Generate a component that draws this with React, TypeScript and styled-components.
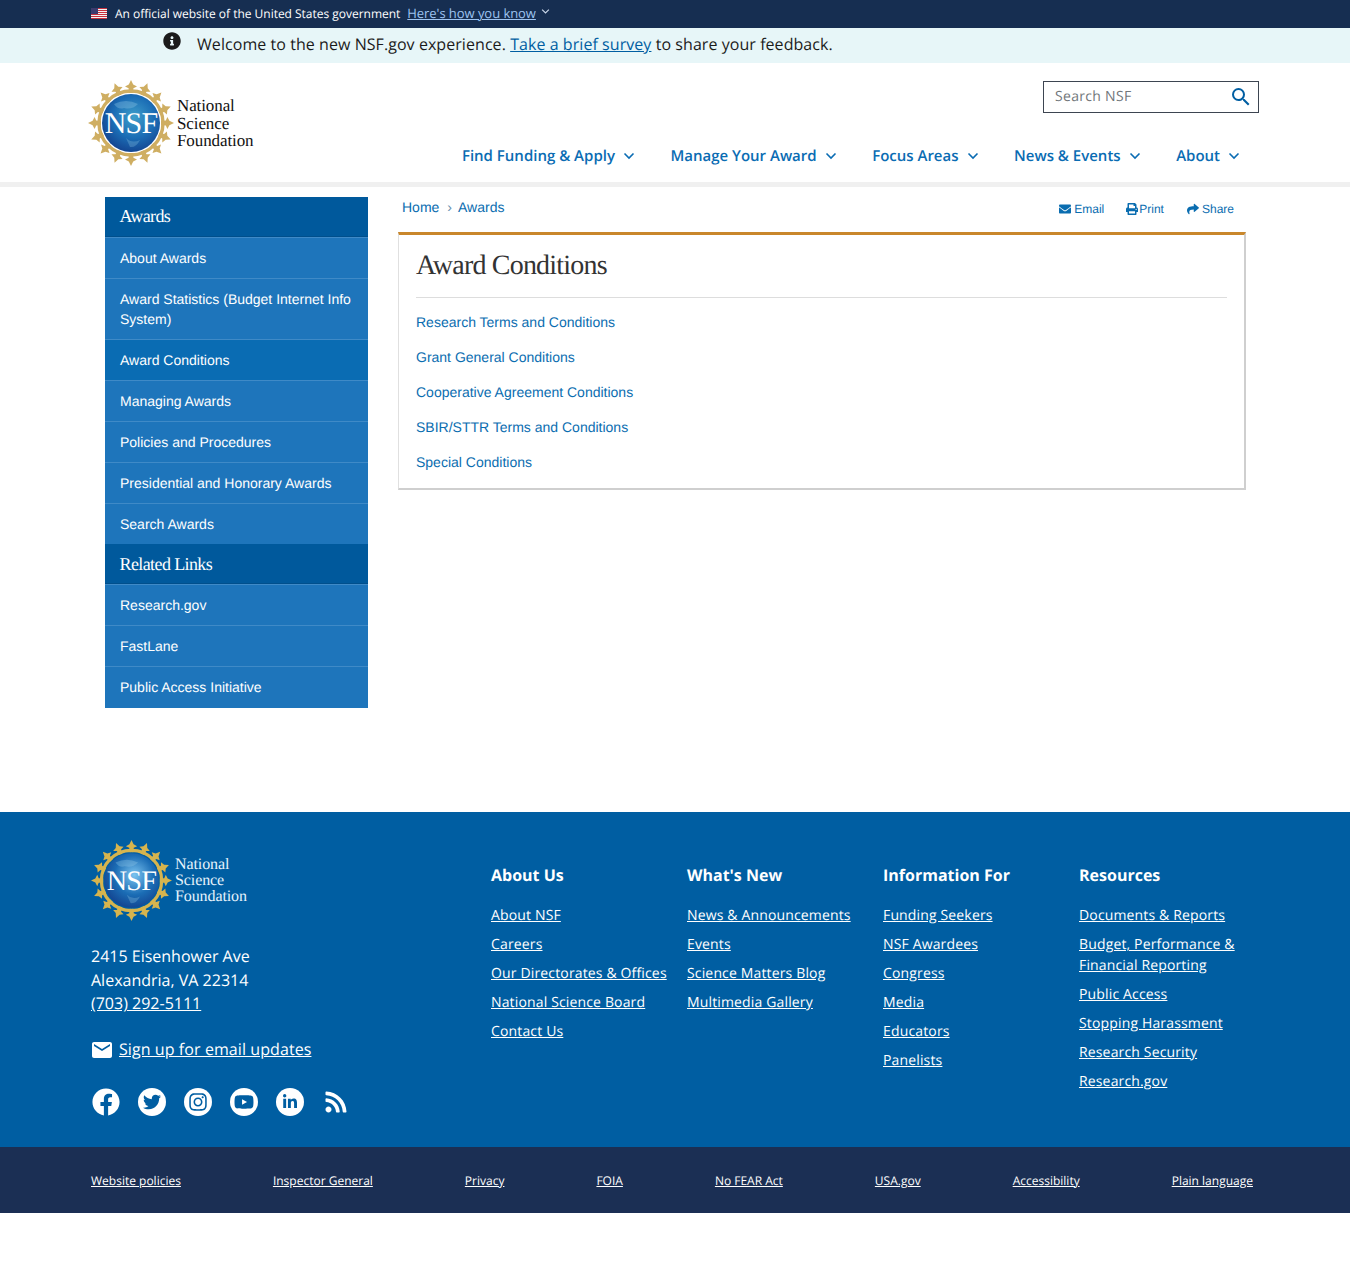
import React from "react";
import styled, { createGlobalStyle } from "styled-components";
import { FaEnvelope, FaPrint, FaShare, FaInfoCircle, FaFacebook, FaTwitter, FaInstagram, FaYoutube, FaLinkedinIn, FaRss } from "react-icons/fa";
import { MdEmail, MdSearch } from "react-icons/md";

const Global = createGlobalStyle`
  html, body { margin: 0; padding: 0; background: #fff; }
  body { font-family: "Open Sans", sans-serif; color: #1b1b1b; text-rendering: geometricPrecision; }
  * { box-sizing: border-box; }
  a { cursor: pointer; }
`;

const Page = styled.div`
  width: 1350px;
  min-height: 1273px;
  background: #fff;
`;

const GovBanner = styled.div`
  height: 28px;
  background: #162e51;
  display: flex;
  align-items: center;
  padding: 0 0 2px 91px;
  color: #fff;
  font-size: 12px;
`;
const GovText = styled.span`
  margin-left: 8px;
  letter-spacing: -0.02px;
`;
const GovLink = styled.a`
  margin-left: 7px;
  color: #9dc3f0;
  font-size: 13px;
  letter-spacing: -0.05px;
  text-decoration: underline;
`;
const GovChevron = styled.span`
  display: inline-flex;
  margin: -3px 0 0 5px;
`;

const Alert = styled.div`
  height: 35px;
  background: #e7f6f8;
  display: flex;
  align-items: flex-start;
  padding-left: 163px;
  font-size: 16px;
  letter-spacing: 0.06px;
  line-height: 32px;
  color: #1b1b1b;
`;
const AlertIcon = styled.span`
  display: inline-flex;
  font-size: 18px;
  margin: 4px 16px 0 0;
  color: #1b1b1b;
`;
const AlertLink = styled.a`
  color: #005ea2;
  text-decoration: underline;
`;

const Header = styled.header`
  height: 124px;
  border-bottom: 5px solid #f0f0f0;
  display: flex;
  justify-content: space-between;
  padding: 17px 91px 0 88px;
`;
const HeaderRight = styled.div`
  display: flex;
  flex-direction: column;
  align-items: flex-end;
  padding-top: 1px;
`;
const SearchBox = styled.div`
  width: 216px;
  height: 32px;
  border: 1px solid #3d4551;
  display: flex;
  align-items: center;
  justify-content: space-between;
  padding: 0 5px 2px 11px;
  font-size: 14px;
  letter-spacing: 0.3px;
  color: #71767a;
`;
const SearchIcon = styled.span`
  display: inline-flex;
  font-size: 24px;
  margin-top: 2px;
  color: #005ea2;
`;
const Nav = styled.nav`
  display: flex;
  gap: 35.5px;
  margin: 33px 19px 0 0;
`;
const NavItem = styled.a`
  display: flex;
  align-items: center;
  gap: 8px;
  font-size: 15px;
  font-weight: 600;
  line-height: 20px;
  height: 20px;
  color: #0a6cb3;
`;

const LogoWrap = styled.div`
  display: flex;
  align-items: center;
  height: 86px;
`;
const LogoText = styled.div<{ $light?: boolean; $size: number; $line: number }>`
  font-family: "Liberation Serif", serif;
  font-size: ${(p) => p.$size}px;
  line-height: ${(p) => p.$line}px;
  letter-spacing: -0.1px;
  color: ${(p) => (p.$light ? "#e6f3fc" : "#111")};
  margin-left: 3px;
  margin-top: 1px;
`;

const Content = styled.main`
  height: 625px;
  display: flex;
  gap: 30px;
  padding: 10px 0 0 105px;
`;

const Side = styled.aside`
  width: 263px;
  align-self: flex-start;
  background: #1e75bb;
  padding-bottom: 1px;
`;
const SideHeading = styled.div<{ $sub?: boolean }>`
  height: 40px;
  background: #00599c;
  color: #fff;
  font-family: "Liberation Serif", serif;
  font-size: 18px;
  letter-spacing: -0.6px;
  line-height: ${(p) => (p.$sub ? "39px" : "38px")};
  padding: ${(p) => (p.$sub ? "1px 0 0 14.5px" : "0 0 0 14.5px")};
  border-bottom: 1px solid #004f8c;
`;
const SideItem = styled.a<{ $active?: boolean }>`
  display: block;
  background: ${(p) => (p.$active ? "#0a6cb3" : "#1e75bb")};
  border-top: 1px solid #3f8ac7;
  color: #fff;
  font-family: "Liberation Sans", sans-serif;
  font-size: 14px;
  line-height: 20px;
  padding: 10px 15px;
`;

const MainCol = styled.section`
  width: 848px;
`;
const TopRow = styled.div`
  height: 35px;
  display: flex;
  justify-content: space-between;
  align-items: flex-start;
  padding: 0 12px 0 4px;
  font-family: "Liberation Sans", sans-serif;
`;
const Crumbs = styled.div`
  display: flex;
  gap: 5px;
  font-size: 14px;
  line-height: 20px;
  color: #0a6db0;
`;
const CrumbSep = styled.span`
  font-size: 14px;
  color: #6a8fb0;
  padding: 0 1px 0 3px;
`;
const Actions = styled.div`
  display: flex;
  gap: 22px;
  padding-top: 4px;
  font-size: 12px;
  line-height: 16px;
  color: #0a6db0;
`;
const ActionItem = styled.a<{ $tight?: boolean }>`
  display: flex;
  align-items: center;
  gap: ${(p) => (p.$tight ? "1px" : "3px")};
  margin-right: ${(p) => (p.$tight ? "1px" : "0")};
`;
const Panel = styled.div`
  height: 258px;
  border-top: 3px solid #c9872b;
  border-left: 1px solid #e0e0e0;
  border-right: 2px solid #cfcfcf;
  border-bottom: 2px solid #cfcfcf;
  padding: 0 17px;
  font-family: "Liberation Sans", sans-serif;
`;
const Title = styled.h1`
  margin: 0;
  height: 63px;
  border-bottom: 1px solid #ddd;
  font-family: "Liberation Serif", serif;
  font-weight: 400;
  font-size: 28px;
  letter-spacing: -0.8px;
  line-height: 61px;
  color: #333;
`;
const LinkList = styled.ul`
  list-style: none;
  margin: 0;
  padding: 14px 0 0;
  display: flex;
  flex-direction: column;
  gap: 15px;
`;
const PanelLink = styled.a`
  display: block;
  font-size: 14px;
  line-height: 20px;
  color: #0a6db0;
`;

const Footer = styled.footer`
  height: 335px;
  background: #005ea2;
  color: #fff;
  display: flex;
  padding: 28px 0 0 91px;
`;
const FootLeft = styled.div`
  width: 400px;
`;
const FootLogo = styled.div`
  display: flex;
  align-items: center;
  height: 81px;
`;
const Address = styled.address`
  font-style: normal;
  font-size: 16px;
  line-height: 23.5px;
  margin-top: 24px;
`;
const FootA = styled.a`
  color: #fff;
  text-decoration: underline;
`;
const Signup = styled.div`
  display: flex;
  align-items: center;
  gap: 5px;
  margin-top: 20px;
  font-size: 16px;
  letter-spacing: 0.08px;
  line-height: 24px;
`;
const MailIcon = styled.span`
  display: inline-flex;
  font-size: 24px;
  margin-left: -1px;
  margin-top: 2px;
`;
const Socials = styled.div`
  display: flex;
  gap: 18px;
  margin-top: 26px;
`;
const Social = styled.a<{ $plain?: boolean; $size: number }>`
  width: 28px;
  height: 28px;
  border-radius: 50%;
  background: ${(p) => (p.$plain ? "transparent" : "#fff")};
  color: ${(p) => (p.$plain ? "#fff" : "#005ea2")};
  display: flex;
  align-items: center;
  justify-content: center;
  font-size: ${(p) => p.$size}px;
  margin-left: 1px;
  margin-right: -1px;
`;
const FootCols = styled.div`
  display: flex;
`;
const FootCol = styled.div`
  width: 196px;
  padding-top: 23px;
`;
const FootHead = styled.h3`
  margin: 0 0 18px;
  font-size: 16px;
  line-height: 24px;
  font-weight: 700;
`;
const FootLinks = styled.div`
  display: flex;
  flex-direction: column;
  gap: 8px;
  font-size: 14px;
  letter-spacing: 0.15px;
  line-height: 21px;
  padding-right: 15px;
`;
const Bottom = styled.div`
  height: 66px;
  background: #1b2f54;
  display: flex;
  justify-content: space-between;
  align-items: center;
  padding: 0 97px 0 91px;
  font-size: 12px;
`;

const Flag = () => (
  <svg width="16" height="11" viewBox="0 0 16 11">
    <rect width="16" height="11" fill="#f4f4f4" />
    {[0, 2, 4, 6, 8, 10].map((y) => (
      <rect key={y} y={y} width="16" height="1" fill="#c8313e" />
    ))}
    <rect width="7" height="6" fill="#3c3b6e" />
  </svg>
);

const Chevron = ({ size = 12, color = "#0a6cb3" }: { size?: number; color?: string }) => (
  <svg width={size} height={size} viewBox="0 0 12 12">
    <path d="M1.5 3.5 L6 8 L10.5 3.5" fill="none" stroke={color} strokeWidth="1.6" />
  </svg>
);

const Seal = ({ size, light }: { size: number; light?: boolean }) => {
  const rays = Array.from({ length: 16 }, (_, i) => (i * 360) / 16);
  const gold = light ? "#d6b44e" : "#cfae62";
  const gid = light ? "gl" : "gd";
  return (
    <svg width={size} height={size} viewBox="0 0 86 86">
      <defs>
        <radialGradient id={gid} cx="55%" cy="40%" r="65%">
          <stop offset="0%" stopColor={light ? "#7cc4f0" : "#3f9fcb"} />
          <stop offset="55%" stopColor="#1b6db5" />
          <stop offset="100%" stopColor="#123f8c" />
        </radialGradient>
      </defs>
      <circle cx="43" cy="43" r="32" fill="none" stroke={gold} strokeWidth="3.4" />
      {rays.map((a) => (
        <g key={a} transform={`rotate(${a} 43 43)`}>
          <path d="M43 0 L45.2 4.6 L49 6.6 L45.4 8.2 L45 13 L41 13 L40.6 8.2 L37 6.6 L40.8 4.6 Z" fill={gold} />
        </g>
      ))}
      <circle cx="43" cy="43" r="29" fill={`url(#${gid})`} />
      <path d="M26 24 Q38 18 50 24 Q44 30 36 28 Q30 30 26 24 Z" fill="#8fc6e4" opacity="0.35" />
      <path d="M38 58 Q44 64 52 60 Q48 68 42 67 Z" fill="#8fc6e4" opacity="0.3" />
      <text x="43" y="53" textAnchor="middle" fontFamily="Liberation Serif, serif" fontSize="30" fill="#fff" letterSpacing="-0.8">
        NSF
      </text>
    </svg>
  );
};

const sideA = ["About Awards", "Award Statistics (Budget Internet Info System)", "Award Conditions", "Managing Awards", "Policies and Procedures", "Presidential and Honorary Awards", "Search Awards"];
const sideB = ["Research.gov", "FastLane", "Public Access Initiative"];
const panelLinks = ["Research Terms and Conditions", "Grant General Conditions", "Cooperative Agreement Conditions", "SBIR/STTR Terms and Conditions", "Special Conditions"];
const navItems = ["Find Funding & Apply", "Manage Your Award", "Focus Areas", "News & Events", "About"];
const footCols = [
  { h: "About Us", l: ["About NSF", "Careers", "Our Directorates & Offices", "National Science Board", "Contact Us"] },
  { h: "What's New", l: ["News & Announcements", "Events", "Science Matters Blog", "Multimedia Gallery"] },
  { h: "Information For", l: ["Funding Seekers", "NSF Awardees", "Congress", "Media", "Educators", "Panelists"] },
  { h: "Resources", l: ["Documents & Reports", "Budget, Performance & Financial Reporting", "Public Access", "Stopping Harassment", "Research Security", "Research.gov"] },
];
const bottomLinks = ["Website policies", "Inspector General", "Privacy", "FOIA", "No FEAR Act", "USA.gov", "Accessibility", "Plain language"];

export default function App() {
  return (
    <Page>
      <Global />
      <GovBanner>
        <Flag />
        <GovText>An official website of the United States government</GovText>
        <GovLink>Here's how you know</GovLink>
        <GovChevron>
          <Chevron size={9} color="#c9d6e8" />
        </GovChevron>
      </GovBanner>
      <Alert>
        <AlertIcon>
          <FaInfoCircle />
        </AlertIcon>
        <span>
          Welcome to the new NSF.gov experience. <AlertLink>Take a brief survey</AlertLink> to share your feedback.
        </span>
      </Alert>
      <Header>
        <LogoWrap>
          <Seal size={86} />
          <LogoText $size={17} $line={17.5}>
            National
            <br />
            Science
            <br />
            Foundation
          </LogoText>
        </LogoWrap>
        <HeaderRight>
          <SearchBox>
            Search NSF
            <SearchIcon>
              <MdSearch />
            </SearchIcon>
          </SearchBox>
          <Nav>
            {navItems.map((n) => (
              <NavItem key={n}>
                {n}
                <Chevron />
              </NavItem>
            ))}
          </Nav>
        </HeaderRight>
      </Header>
      <Content>
        <Side>
          <SideHeading>Awards</SideHeading>
          {sideA.map((s) => (
            <SideItem key={s} $active={s === "Award Conditions"}>
              {s}
            </SideItem>
          ))}
          <SideHeading $sub>Related Links</SideHeading>
          {sideB.map((s) => (
            <SideItem key={s}>{s}</SideItem>
          ))}
        </Side>
        <MainCol>
          <TopRow>
            <Crumbs>
              <a>Home</a>
              <CrumbSep>›</CrumbSep>
              <a>Awards</a>
            </Crumbs>
            <Actions>
              <ActionItem>
                <FaEnvelope /> Email
              </ActionItem>
              <ActionItem $tight>
                <FaPrint /> Print
              </ActionItem>
              <ActionItem>
                <FaShare /> Share
              </ActionItem>
            </Actions>
          </TopRow>
          <Panel>
            <Title>Award Conditions</Title>
            <LinkList>
              {panelLinks.map((l) => (
                <li key={l}>
                  <PanelLink>{l}</PanelLink>
                </li>
              ))}
            </LinkList>
          </Panel>
        </MainCol>
      </Content>
      <Footer>
        <FootLeft>
          <FootLogo>
            <Seal size={81} light />
            <LogoText $light $size={16} $line={16}>
              National
              <br />
              Science
              <br />
              Foundation
            </LogoText>
          </FootLogo>
          <Address>
            2415 Eisenhower Ave
            <br />
            Alexandria, VA 22314
            <br />
            <FootA>(703) 292-5111</FootA>
          </Address>
          <Signup>
            <MailIcon>
              <MdEmail />
            </MailIcon>
            <FootA>Sign up for email updates</FootA>
          </Signup>
          <Socials>
            <Social $plain $size={28}>
              <FaFacebook />
            </Social>
            <Social $size={18}>
              <FaTwitter />
            </Social>
            <Social $size={20}>
              <FaInstagram />
            </Social>
            <Social $size={20}>
              <FaYoutube />
            </Social>
            <Social $size={16}>
              <FaLinkedinIn />
            </Social>
            <Social $plain $size={24}>
              <FaRss />
            </Social>
          </Socials>
        </FootLeft>
        <FootCols>
          {footCols.map((c) => (
            <FootCol key={c.h}>
              <FootHead>{c.h}</FootHead>
              <FootLinks>
                {c.l.map((l) => (
                  <FootA key={l}>{l}</FootA>
                ))}
              </FootLinks>
            </FootCol>
          ))}
        </FootCols>
      </Footer>
      <Bottom>
        {bottomLinks.map((b) => (
          <FootA key={b}>{b}</FootA>
        ))}
      </Bottom>
    </Page>
  );
}
